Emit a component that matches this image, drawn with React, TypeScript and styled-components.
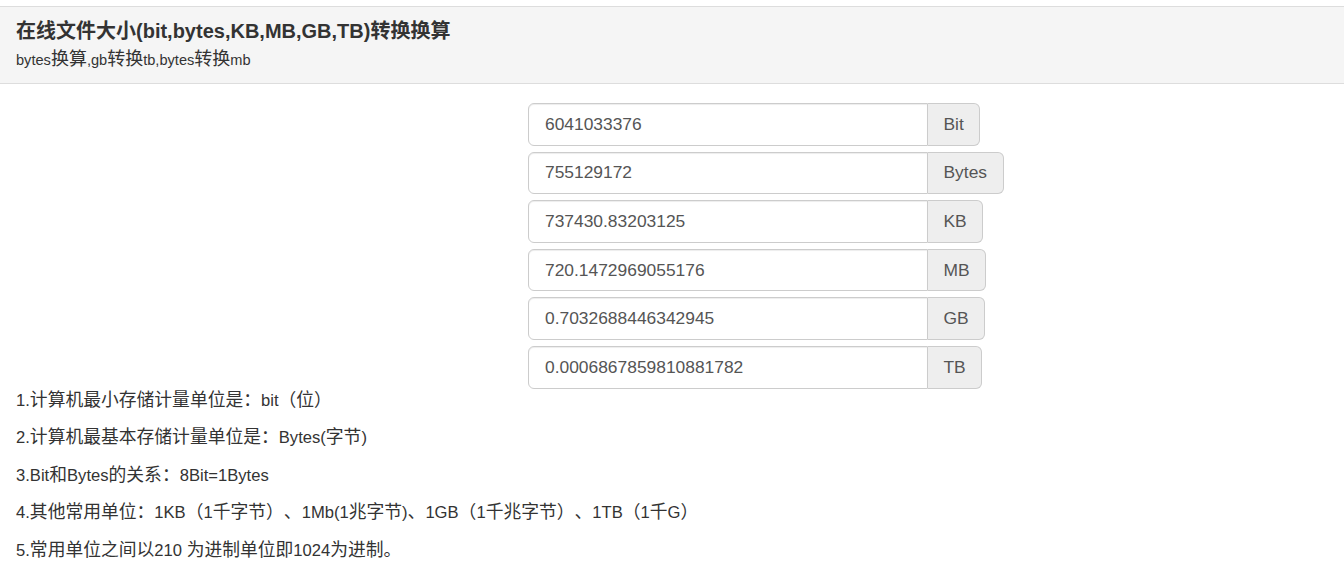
import React from "react";
import styled, { createGlobalStyle } from "styled-components";

const Global = createGlobalStyle`
  html, body { margin: 0; padding: 0; background: #fff; }
  body {
    font-family: "Liberation Sans", Arial, "Noto Sans CJK SC", sans-serif;
    color: #333;
  }
  * { box-sizing: border-box; }
`;

const Page = styled.div`
  padding-top: 6px;
`;

const Heading = styled.header`
  background: #f5f5f5;
  border-top: 1px solid #dddddd;
  border-bottom: 1px solid #dddddd;
  padding: 12px 16px 13px;
`;

const Title = styled.h1`
  margin: 0;
  font-size: 20px;
  line-height: 24px;
  font-weight: bold;
  color: #333;
`;

const Subtitle = styled.p`
  margin: 7px 0 0;
  font-size: 14.6px;
  line-height: 20px;
  color: #333;
`;

const Han = styled.span<{ $size: number }>`
  font-family: "Noto Sans CJK SC", sans-serif;
  font-size: ${(p) => p.$size}px;
  line-height: 0;
  text-spacing-trim: space-all;
`;

const Converter = styled.div`
  display: flex;
  flex-direction: column;
  align-items: flex-start;
  gap: 6px;
  padding: 19px 0 0 528px;
`;

const Group = styled.div`
  display: inline-flex;
  height: 42.6px;
`;

const Field = styled.input`
  width: 400px;
  height: 100%;
  border: 1px solid #cccccc;
  border-radius: 6px 0 0 6px;
  padding: 0 15px 0 16px;
  font-family: "Liberation Sans", Arial, sans-serif;
  font-size: 17.4px;
  color: #555;
  background: #fff;
  box-shadow: inset 0 1px 1px rgba(0, 0, 0, 0.075);
  outline: none;
`;

const Addon = styled.span`
  display: flex;
  align-items: center;
  height: 100%;
  padding: 0 15.5px;
  background: #eeeeee;
  border: 1px solid #cccccc;
  border-left: 0;
  border-radius: 0 6px 6px 0;
  font-size: 17.4px;
  color: #555;
`;

const Notes = styled.div`
  padding: 0 16px;
  margin-top: -2px;
`;

const Note = styled.p`
  margin: 0 0 10px;
  font-size: 16.6px;
  line-height: 27.5px;
  color: #333;
`;

const CJK = /([\u3000-\u303f\u4e00-\u9fff\uff00-\uffef]+)/;

function Mixed({ text, size }: { text: string; size: number }) {
  return (
    <>
      {text.split(CJK).map((part, i) =>
        i % 2 === 1 ? (
          <Han key={i} $size={size}>
            {part}
          </Han>
        ) : (
          part
        )
      )}
    </>
  );
}

const units = [
  ["6041033376", "Bit"],
  ["755129172", "Bytes"],
  ["737430.83203125", "KB"],
  ["720.1472969055176", "MB"],
  ["0.7032688446342945", "GB"],
  ["0.0006867859810881782", "TB"],
];

const notes = [
  "1.计算机最小存储计量单位是：bit（位）",
  "2.计算机最基本存储计量单位是：Bytes(字节)",
  "3.Bit和Bytes的关系：8Bit=1Bytes",
  "4.其他常用单位：1KB（1千字节）、1Mb(1兆字节)、1GB（1千兆字节）、1TB（1千G）",
  "5.常用单位之间以210 为进制单位即1024为进制。",
];

export default function App() {
  return (
    <Page>
      <Global />
      <Heading>
        <Title>
          <Mixed text="在线文件大小(bit,bytes,KB,MB,GB,TB)转换换算" size={20} />
        </Title>
        <Subtitle>
          <Mixed text="bytes换算,gb转换tb,bytes转换mb" size={18} />
        </Subtitle>
      </Heading>
      <Converter>
        {units.map(([v, u]) => (
          <Group key={u}>
            <Field defaultValue={v} />
            <Addon>{u}</Addon>
          </Group>
        ))}
      </Converter>
      <Notes>
        {notes.map((n) => (
          <Note key={n}>
            <Mixed text={n} size={17.8} />
          </Note>
        ))}
      </Notes>
    </Page>
  );
}
